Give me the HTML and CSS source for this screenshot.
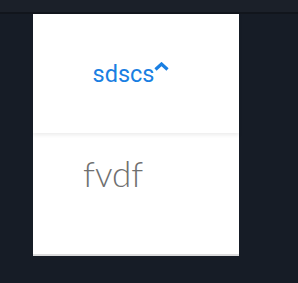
FILE: index.html
```html
<!DOCTYPE html>
<html lang="en">
<head>
    <meta charset="UTF-8">
    <meta name="viewport" content="width=device-width, initial-scale=1.0">
    <title>Accordion</title>
    <link rel="stylesheet" href="styles.css">
</head>
<body>
    <div class="topbar"></div>
    <div class="page">
        <div class="panel">
            <div class="panel-head">
                <span class="panel-title">sdscs</span>
                <svg class="chevron" width="15" height="9" viewBox="0 0 15 9">
                    <path d="M1.5 7.5 L7.5 2 L13.5 7.5" fill="none" stroke="#1a7fe2" stroke-width="3.2"/>
                </svg>
            </div>
            <div class="panel-body">
                <p class="panel-text">fvdf</p>
            </div>
        </div>
    </div>
</body>
</html>
```

FILE: styles.css
```css
* {
    box-sizing: border-box;
    margin: 0;
    padding: 0;
}

body {
    font-family: Roboto, sans-serif;
    background: #161c26;
    height: 283px;
    overflow: hidden;
}

.topbar {
    height: 14px;
    background: #1b2029;
    border-bottom: 2px solid #11151c;
}

.page {
    padding-left: 33px;
}

.panel {
    width: 206px;
    background: #fff;
    border-bottom: 2px solid #dcdcdc;
}

.panel-head {
    height: 119px;
    display: flex;
    justify-content: center;
    align-items: center;
    padding-right: 10px;
    box-shadow: 0 2px 4px rgba(0,0,0,0.08);
}

.panel-title {
    color: #1a7fe2;
    font-size: 23.5px;
    margin-top: 1px;
}

.chevron {
    margin-top: -15px;
}

.panel-body {
    height: 121px;
    padding: 19px 0 0 50px;
}

.panel-text {
    font-family: Lato, "Open Sans", sans-serif;
    font-weight: 300;
    font-size: 35px;
    color: #707070;
}
```
